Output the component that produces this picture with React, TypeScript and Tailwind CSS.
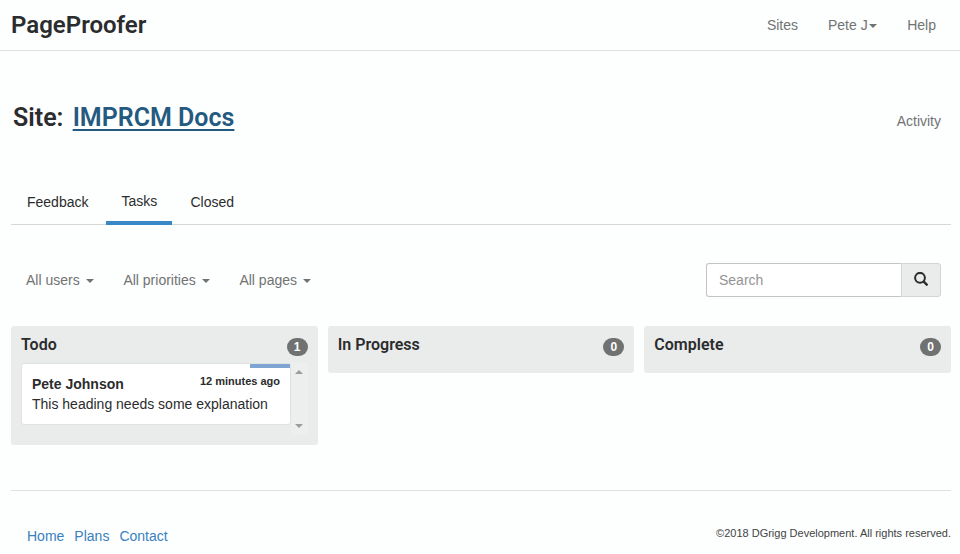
import React from "react";

function Caret({ className = "" }: { className?: string }) {
  return (
    <span
      className={`inline-block h-0 w-0 border-x-4 border-t-4 border-x-transparent border-t-current ${className}`}
    />
  );
}

function Filter({ label }: { label: string }) {
  return (
    <button className="flex items-center text-sm whitespace-nowrap text-[#717373]">
      {label}
      <Caret className="mt-0.5 ml-1.5" />
    </button>
  );
}

function Column({ title, count, children }: { title: string; count: number; children?: React.ReactNode }) {
  return (
    <section className="min-w-0 flex-1 rounded-[3px] bg-[#eaebeb] px-2.5">
      <div className="flex h-[37px] justify-between">
        <h2 className="pt-[9px] font-[Roboto,sans-serif] text-base leading-[19px] font-semibold">{title}</h2>
        <span className="mt-3 flex h-[18px] w-[21px] items-center justify-center rounded-full bg-[#707171] text-xs font-bold text-white">
          {count}
        </span>
      </div>
      {children}
    </section>
  );
}

export default function App() {
  return (
    <div className="h-[554px] w-[960px] overflow-hidden bg-[#fdfefe] font-['Liberation_Sans',Arial,sans-serif] text-sm text-[#2b2c2d]">
      <header className="flex h-[51px] items-center justify-between border-b border-[#e0e2e2] pr-6 pl-[11px]">
        <div className="font-[Roboto,sans-serif] text-2xl font-semibold">PageProofer</div>
        <nav className="flex text-[#717373]">
          <a className="mr-[30px]">Sites</a>
          <a className="mr-[30px] flex items-center">
            Pete J<Caret className="mt-px ml-[1.5px]" />
          </a>
          <a>Help</a>
        </nav>
      </header>
      <main className="pr-[9px] pl-[11px]">
        <div className="flex h-[133px] items-center justify-between pr-2.5 pl-[2px]">
          <h1 className="font-[Roboto,sans-serif] text-[25px] leading-8 font-semibold">
            Site:{" "}
            <a className="ml-[3px] text-[#245a80] underline decoration-2 underline-offset-[3px]">IMPRCM Docs</a>
          </h1>
          <a className="mt-1.5 text-[#717373]">Activity</a>
        </div>
        <nav className="flex h-[41px] border-b border-[#d6d8d8]">
          <a className="w-[95px] pt-2 pl-4">Feedback</a>
          <a className="h-[41px] w-[66px] border-b-4 border-[#3888c8] pt-[7px] pl-[15.5px]">Tasks</a>
          <a className="pt-2 pl-[18.5px]">Closed</a>
        </nav>
        <div className="flex h-[101px] items-start justify-between pt-[38px] pr-2.5 pl-[15px]">
          <div className="flex h-[34px] items-center gap-[29.7px]">
            <Filter label="All users" />
            <Filter label="All priorities" />
            <Filter label="All pages" />
          </div>
          <div className="flex h-[34px] w-[235px]">
            <input
              className="w-[195px] rounded-l-[3px] border border-r-0 border-[#c3c5c5] bg-white px-3 placeholder:text-[#929494]"
              placeholder="Search"
            />
            <button className="flex w-[40px] items-center justify-center rounded-r-[3px] border border-[#d3d5d5] bg-[#eaebeb]">
              <svg className="mb-0.5 h-[14px] w-[14px]" viewBox="0 0 14 14" fill="none" stroke="#2b2c2d">
                <circle cx="6" cy="5.8" r="4.9" strokeWidth="2" />
                <path d="M9.3 9.2l4.2 4.2" strokeWidth="2.4" />
              </svg>
            </button>
          </div>
        </div>
        <div className="flex items-start gap-2.5">
          <Column title="Todo" count={1}>
            <div className="flex h-[82px]">
              <article className="relative h-[62px] w-[270px] shrink-0 rounded-[3px] border border-[#e0e1e1] bg-white px-2.5">
                <div className="absolute top-0 right-0 h-1 w-10 bg-[#7fa6d3]" />
                <div className="flex justify-between">
                  <strong className="pt-2.5 leading-5">Pete Johnson</strong>
                  <strong className="pt-[9px] text-[11px] leading-4">12 minutes ago</strong>
                </div>
                <p className="leading-5">This heading needs some explanation</p>
              </article>
              <div className="-mt-px flex h-[73px] w-[17px] flex-col items-center justify-between bg-[#edeeee] pt-2 pb-[7px]">
                <span className="h-0 w-0 border-x-4 border-b-4 border-x-transparent border-b-[#9b9c9c]" />
                <span className="h-0 w-0 border-x-4 border-t-4 border-x-transparent border-t-[#9b9c9c]" />
              </div>
            </div>
          </Column>
          <Column title="In Progress" count={0}>
            <div className="h-2.5" />
          </Column>
          <Column title="Complete" count={0}>
            <div className="h-2.5" />
          </Column>
        </div>
        <footer className="mt-[45px] flex h-[64px] items-start justify-between border-t border-[#dfe1e1]">
          <nav className="flex gap-2.5 pt-[35px] pl-4 text-[#3981bd]">
            <a>Home</a>
            <a>Plans</a>
            <a>Contact</a>
          </nav>
          <p className="pt-[34px] text-[11px] leading-4 text-[#424344]">©2018 DGrigg Development. All rights reserved.</p>
        </footer>
      </main>
    </div>
  );
}
